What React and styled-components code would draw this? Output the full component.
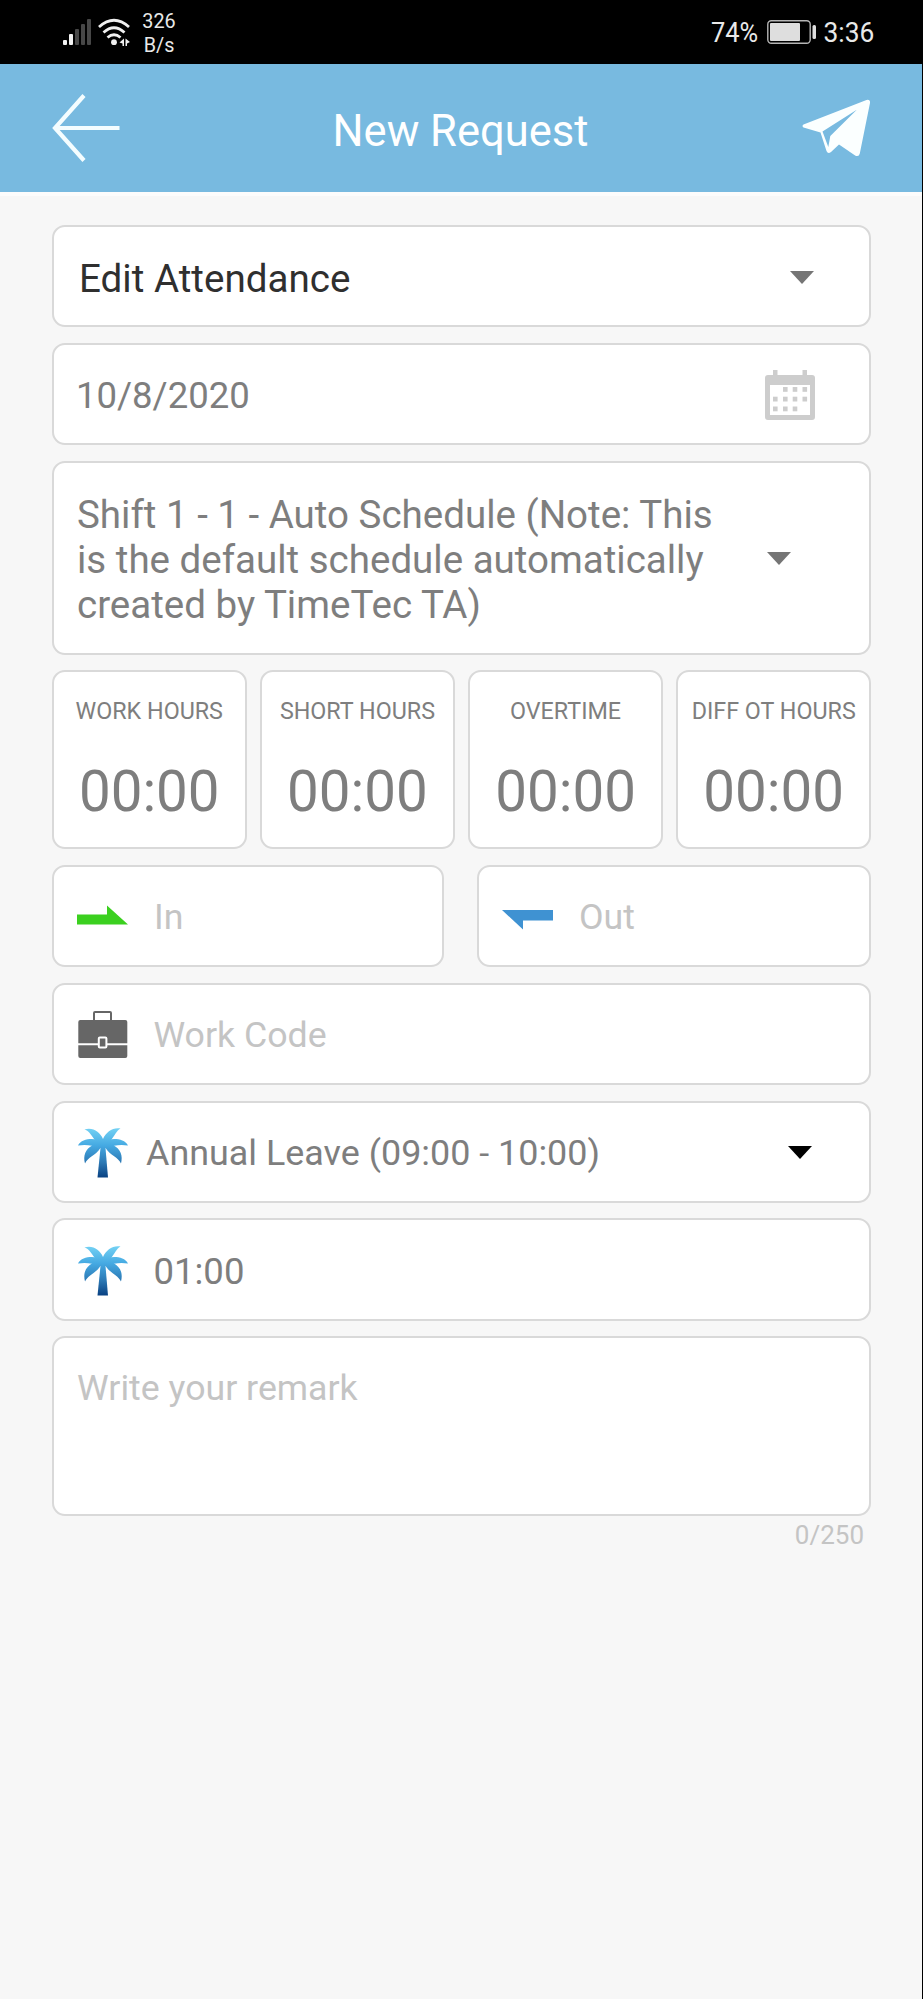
import React from 'react';
import styled, { createGlobalStyle } from 'styled-components';

const GlobalStyle = createGlobalStyle`
  * {
    box-sizing: border-box;
  }
  body {
    margin: 0;
    background-color: #f7f7f7;
    font-family: Roboto, 'Liberation Sans', sans-serif;
    color: #7e7e7e;
  }
  svg {
    display: block;
    flex-shrink: 0;
  }
`;

const Screen = styled.div`
  width: 923px;
  height: 1999px;
  border-right: 1px solid #000000;
  background-color: #f7f7f7;
  overflow: hidden;
`;

const StatusBar = styled.div`
  display: flex;
  align-items: center;
  justify-content: space-between;
  height: 64px;
  padding: 0 48px 0 63px;
  background-color: #000000;
  color: #e9e9e9;
`;

const StatusGroup = styled.div`
  display: flex;
  align-items: center;
`;

const NetSpeed = styled.div`
  width: 40px;
  margin-left: 8px;
  padding-top: 3px;
  font-size: 19.8px;
  line-height: 23.5px;
  text-align: center;
`;

const StatusText = styled.span`
  width: ${(props) => props.width};
  padding-top: 2px;
  font-size: 28px;
  line-height: 32px;
  white-space: nowrap;
  transform: scaleX(${(props) => props.squeeze});
  transform-origin: left;
`;

const Header = styled.header`
  display: flex;
  align-items: center;
  justify-content: space-between;
  height: 128px;
  padding: 0 52px 0 51px;
  background-color: #78bae0;
  box-shadow: 0 4px 0 #fcfcfc;
  color: #ffffff;
`;

const Title = styled.h1`
  margin: 0;
  padding: 7px 2px 0 0;
  font-size: 43.5px;
  font-weight: 400;
  line-height: 50px;
`;

const Form = styled.main`
  display: flex;
  flex-direction: column;
  gap: 15.5px;
  padding: 33px 51px 0 52px;
`;

const Box = styled.div`
  border: 2px solid #d9d9d9;
  border-radius: 13px;
  background-color: #ffffff;
`;

const Field = styled(Box)`
  display: flex;
  align-items: center;
  height: ${(props) => props.height || '102.4px'};
  padding: 2px ${(props) => props.right || '54px'} 0 ${(props) => props.left || '23px'};
`;

const FieldText = styled.div`
  flex: 1;
  padding-top: 2px;
  margin-left: ${(props) => props.gap || '0'};
  font-size: ${(props) => props.size || '36.5px'};
  line-height: 45.2px;
  color: ${(props) => props.color || '#7e7e7e'};
  white-space: pre-line;
`;

const Placeholder = styled(FieldText)`
  font-size: 35.7px;
  color: #c4c4c4;
`;

const HoursRow = styled.div`
  display: grid;
  grid-template-columns: repeat(4, 1fr);
  gap: 13.6px;
  height: 179px;
`;

const HoursCard = styled(Box)`
  display: flex;
  flex-direction: column;
  align-items: center;
  padding-top: 25px;
`;

const HoursLabel = styled.div`
  font-size: 23.3px;
  line-height: 28px;
  white-space: nowrap;
`;

const HoursValue = styled.div`
  margin-top: 34px;
  font-size: 56.5px;
  line-height: 66px;
`;

const PunchRow = styled.div`
  display: grid;
  grid-template-columns: 392px 394px;
  justify-content: space-between;
`;

const Remark = styled(Box)`
  display: flex;
  height: 179.5px;
  padding: 26px 23px;
`;

const Counter = styled.div`
  margin-top: -11px;
  padding-right: 7px;
  font-size: 26px;
  line-height: 30px;
  text-align: right;
  color: #c4c4c4;
`;

const SignalIcon = () => (
  <svg width="28" height="28" viewBox="0 0 28 28">
    <rect x="0" y="22" width="4" height="5" rx="1" fill="#f2f2f2" />
    <rect x="6" y="16" width="4" height="11" rx="1" fill="#f2f2f2" />
    <rect x="12" y="11" width="4" height="16" rx="1" fill="#474747" />
    <rect x="18" y="6" width="4" height="21" rx="1" fill="#474747" />
    <rect x="24" y="1" width="4" height="26" rx="1" fill="#474747" />
  </svg>
);

const WifiIcon = () => (
  <svg width="40" height="28" viewBox="0 0 40 28">
    <g fill="none" stroke="#f0f0f0" strokeWidth="2.8">
      <path d="M8 9 Q23 -4.5 38 9" />
      <path d="M12.5 14.5 Q23 5 33.5 14.5" />
      <path d="M16.5 19.5 Q23 14 29.5 19.5" />
    </g>
    <circle cx="23" cy="24.2" r="2.9" fill="#f0f0f0" />
    <path d="M28.5 24.5 L33 20.5 V28 H31.5 V25.5Z M34.5 20.5 L39 24 L36 25.5 V28 H34.5Z" fill="#f0f0f0" />
  </svg>
);

const BatteryIcon = () => (
  <svg width="50" height="24" viewBox="0 0 50 24">
    <rect x="0.8" y="0.8" width="42.4" height="22.4" rx="3.5" fill="none" stroke="#b5b5b5" strokeWidth="1.4" />
    <rect x="3" y="3" width="30" height="18" rx="1" fill="#dedede" />
    <rect x="45.5" y="5" width="3.5" height="14" rx="1.5" fill="#dedede" />
  </svg>
);

const BackIcon = () => (
  <svg width="70" height="70" viewBox="0 0 70 70">
    <path d="M33 2.5 L4 35 L33 67.5 M4 35 H68.5" fill="none" stroke="#f4fdff" strokeWidth="4.2" />
  </svg>
);

const SendIcon = () => (
  <svg width="68" height="58" viewBox="0 0 68 58">
    <path
      d="M1.5 25.5 L64.5 1 Q68.5 0 68 4 L57.8 54.5 Q57 58 53.5 56.7 L37 45.5 L29 53 Q26 55.5 24.5 52 L18.5 33.5 L1.5 28.5 Q-0.5 27 1.5 25.5Z"
      fill="#fbffff"
    />
    <path d="M54.8 10.7 L20.5 32.5 L26.3 48 L28.3 37Z" fill="#78bae0" />
  </svg>
);

const Caret = ({ color = '#757575' }) => (
  <svg width="24" height="13" viewBox="0 0 24 13">
    <path d="M0 0 H24 L12 13Z" fill={color} />
  </svg>
);

const calendarDots = [
  [18, 17], [27.7, 17], [37.5, 17],
  [8, 26.7], [18, 26.7], [27.7, 26.7], [37.5, 26.7],
  [8, 36.5], [18, 36.5], [27.7, 36.5],
];

const CalendarIcon = () => (
  <svg width="50" height="50" viewBox="0 0 50 50">
    <path
      d="M8 0 H12.5 V5 H37.5 V0 H42 V5 H47 Q50 5 50 8 V47 Q50 50 47 50 H3 Q0 50 0 47 V8 Q0 5 3 5 H8Z M5 15 V45 H45 V15Z"
      fill="#cdcdcd"
      fillRule="evenodd"
    />
    {calendarDots.map(([x, y]) => (
      <rect key={`${x}-${y}`} x={x} y={y} width="4.6" height="4.8" fill="#cdcdcd" />
    ))}
  </svg>
);

const InIcon = () => (
  <svg width="51" height="26" viewBox="0 0 51 26">
    <path d="M0 10.5 H30 V1.5 L51 20.5 H0Z" fill="#3bd01f" />
  </svg>
);

const OutIcon = () => (
  <svg width="51" height="26" viewBox="0 0 51 26">
    <path d="M0 6 H51 V16.5 H21 V25.5Z" fill="#3f92d2" />
  </svg>
);

const BriefcaseIcon = () => (
  <svg width="50" height="50" viewBox="0 0 50 50">
    <path d="M16 11 V3 Q16 2 17 2 H32 Q33 2 33 3 V11" fill="none" stroke="#666666" strokeWidth="2" />
    <rect x="0.3" y="10" width="49" height="38" rx="2" fill="#666666" />
    <path d="M0 34.3 H50" stroke="#ffffff" strokeWidth="2" />
    <rect x="20.8" y="27.5" width="7.6" height="10" rx="1" fill="#666666" stroke="#ffffff" strokeWidth="2" />
  </svg>
);

const PalmIcon = ({ id }) => (
  <svg width="50" height="50" viewBox="0 0 50 50">
    <defs>
      <linearGradient id={id} x1="0" y1="0" x2="0" y2="50" gradientUnits="userSpaceOnUse">
        <stop offset="0" stopColor="#74d2f4" />
        <stop offset="0.35" stopColor="#45a9e2" />
        <stop offset="0.7" stopColor="#2b77b3" />
        <stop offset="1" stopColor="#083f80" />
      </linearGradient>
    </defs>
    <g fill={`url(#${id})`}>
      <path d="M25 11 C22 4 15 -1 6.5 1.5 C12 3 13 8 18 13 L25 16 L32 13 C37 8 38 3 42.5 0.5 C35 -1 28 4 25 11Z" />
      <path d="M25 13 C17 10 4 9.5 0 17.5 C8 16 15 17.5 20 20 H30 C35 17.5 42 16 50 17.5 C46 9.5 33 10 25 13Z" />
      <path d="M25 14 L15 17 C7 21 5 28 7 35.5 C10 29 17 28 22.5 20 H27.5 C33 28 40 29 43 35.5 C45 28 43 21 35 17Z" />
      <path d="M25 16 L22.5 20 L19.5 49.5 H30 L27.5 20Z" />
    </g>
  </svg>
);

const hours = ['WORK HOURS', 'SHORT HOURS', 'OVERTIME', 'DIFF OT HOURS'];

const shiftText = `Shift 1 - 1 - Auto Schedule (Note: This
is the default schedule automatically
created by TimeTec TA)`;

const App = () => {
  return (
    <>
      <GlobalStyle />
      <Screen>
        <StatusBar>
          <StatusGroup>
            <SignalIcon />
            <WifiIcon />
            <NetSpeed>
              <div>326</div>
              <div>B/s</div>
            </NetSpeed>
          </StatusGroup>
          <StatusGroup>
            <StatusText width="56px" squeeze={0.907}>74%</StatusText>
            <BatteryIcon />
            <StatusText width="57px" squeeze={0.94}>&nbsp;3:36</StatusText>
          </StatusGroup>
        </StatusBar>
        <Header>
          <BackIcon />
          <Title>New Request</Title>
          <SendIcon />
        </Header>
        <Form>
          <Field left="25px" right="55px">
            <FieldText size="38.6px" color="#2f2f2f">Edit Attendance</FieldText>
            <Caret />
          </Field>
          <Field left="22px">
            <FieldText>10/8/2020</FieldText>
            <CalendarIcon />
          </Field>
          <Field height="194px" left="23px" right="78px">
            <FieldText size="38.5px">{shiftText}</FieldText>
            <Caret />
          </Field>
          <HoursRow>
            {hours.map((label) => (
              <HoursCard key={label}>
                <HoursLabel>{label}</HoursLabel>
                <HoursValue>00:00</HoursValue>
              </HoursCard>
            ))}
          </HoursRow>
          <PunchRow>
            <Field>
              <InIcon />
              <Placeholder gap="26px">In</Placeholder>
            </Field>
            <Field>
              <OutIcon />
              <Placeholder gap="26px">Out</Placeholder>
            </Field>
          </PunchRow>
          <Field left="24px">
            <BriefcaseIcon />
            <Placeholder gap="25.5px">Work Code</Placeholder>
          </Field>
          <Field left="24px" right="57px">
            <PalmIcon id="palm-leave" />
            <FieldText size="35.9px" gap="18px">Annual Leave (09:00 - 10:00)</FieldText>
            <Caret color="#000000" />
          </Field>
          <Field left="24px">
            <PalmIcon id="palm-hours" />
            <FieldText gap="25.5px">01:00</FieldText>
          </Field>
          <Remark>
            <Placeholder>Write your remark</Placeholder>
          </Remark>
          <Counter>0/250</Counter>
        </Form>
      </Screen>
    </>
  );
};

export default App;
